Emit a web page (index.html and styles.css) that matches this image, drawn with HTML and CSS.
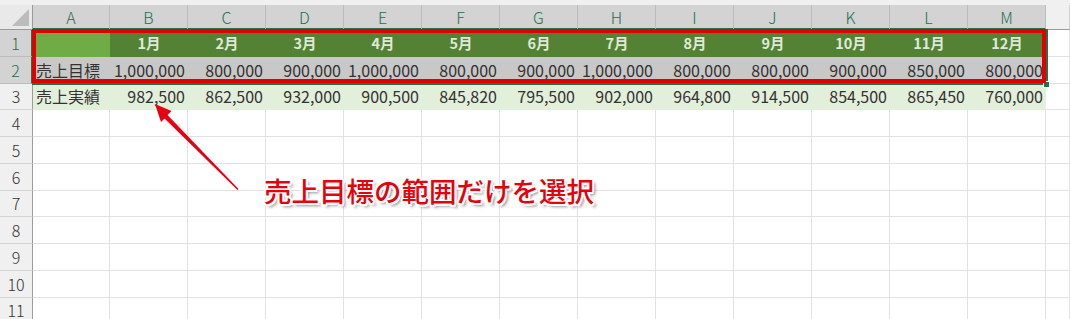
FILE: index.html
```html
<!DOCTYPE html>
<html lang="ja">
<head>
<meta charset="utf-8">
<title>売上目標</title>
<link rel="stylesheet" href="styles.css">
</head>
<body>
<div class="app">
  <div class="topstrip"></div>
  <div class="sheet">
    <div class="corner"><span class="tri"></span></div>
    <div class="ch sel">A</div><div class="ch sel">B</div><div class="ch sel">C</div><div class="ch sel">D</div><div class="ch sel">E</div><div class="ch sel">F</div><div class="ch sel">G</div><div class="ch sel">H</div><div class="ch sel">I</div><div class="ch sel">J</div><div class="ch sel">K</div><div class="ch sel">L</div><div class="ch sel">M</div><div class="ch"></div>

    <div class="rh sel">1</div>
    <div class="c hd-a"></div><div class="c hd">1月</div><div class="c hd">2月</div><div class="c hd">3月</div><div class="c hd">4月</div><div class="c hd">5月</div><div class="c hd">6月</div><div class="c hd">7月</div><div class="c hd">8月</div><div class="c hd">9月</div><div class="c hd">10月</div><div class="c hd">11月</div><div class="c hd">12月</div><div class="c"></div>

    <div class="rh sel">2</div>
    <div class="c tg lbl">売上目標</div><div class="c tg num">1,000,000</div><div class="c tg num">800,000</div><div class="c tg num">900,000</div><div class="c tg num">1,000,000</div><div class="c tg num">800,000</div><div class="c tg num">900,000</div><div class="c tg num">1,000,000</div><div class="c tg num">800,000</div><div class="c tg num">800,000</div><div class="c tg num">900,000</div><div class="c tg num">850,000</div><div class="c tg num">800,000</div><div class="c"></div>

    <div class="rh">3</div>
    <div class="c ac lbl">売上実績</div><div class="c ac num">982,500</div><div class="c ac num">862,500</div><div class="c ac num">932,000</div><div class="c ac num">900,500</div><div class="c ac num">845,820</div><div class="c ac num">795,500</div><div class="c ac num">902,000</div><div class="c ac num">964,800</div><div class="c ac num">914,500</div><div class="c ac num">854,500</div><div class="c ac num">865,450</div><div class="c ac num">760,000</div><div class="c"></div>

    <div class="rh">4</div>
    <div class="c"></div><div class="c"></div><div class="c"></div><div class="c"></div><div class="c"></div><div class="c"></div><div class="c"></div><div class="c"></div><div class="c"></div><div class="c"></div><div class="c"></div><div class="c"></div><div class="c"></div><div class="c"></div>
    <div class="rh">5</div>
    <div class="c"></div><div class="c"></div><div class="c"></div><div class="c"></div><div class="c"></div><div class="c"></div><div class="c"></div><div class="c"></div><div class="c"></div><div class="c"></div><div class="c"></div><div class="c"></div><div class="c"></div><div class="c"></div>
    <div class="rh">6</div>
    <div class="c"></div><div class="c"></div><div class="c"></div><div class="c"></div><div class="c"></div><div class="c"></div><div class="c"></div><div class="c"></div><div class="c"></div><div class="c"></div><div class="c"></div><div class="c"></div><div class="c"></div><div class="c"></div>
    <div class="rh">7</div>
    <div class="c"></div><div class="c"></div><div class="c"></div><div class="c"></div><div class="c"></div><div class="c"></div><div class="c"></div><div class="c"></div><div class="c"></div><div class="c"></div><div class="c"></div><div class="c"></div><div class="c"></div><div class="c"></div>
    <div class="rh">8</div>
    <div class="c"></div><div class="c"></div><div class="c"></div><div class="c"></div><div class="c"></div><div class="c"></div><div class="c"></div><div class="c"></div><div class="c"></div><div class="c"></div><div class="c"></div><div class="c"></div><div class="c"></div><div class="c"></div>
    <div class="rh">9</div>
    <div class="c"></div><div class="c"></div><div class="c"></div><div class="c"></div><div class="c"></div><div class="c"></div><div class="c"></div><div class="c"></div><div class="c"></div><div class="c"></div><div class="c"></div><div class="c"></div><div class="c"></div><div class="c"></div>
    <div class="rh">10</div>
    <div class="c"></div><div class="c"></div><div class="c"></div><div class="c"></div><div class="c"></div><div class="c"></div><div class="c"></div><div class="c"></div><div class="c"></div><div class="c"></div><div class="c"></div><div class="c"></div><div class="c"></div><div class="c"></div>
    <div class="rh">11</div>
    <div class="c"></div><div class="c"></div><div class="c"></div><div class="c"></div><div class="c"></div><div class="c"></div><div class="c"></div><div class="c"></div><div class="c"></div><div class="c"></div><div class="c"></div><div class="c"></div><div class="c"></div><div class="c"></div>
  </div>

  <div class="xl-sel"></div>
  <div class="handle"></div>
  <div class="redbox"></div>
  <svg class="arrow" width="1070" height="319" viewBox="0 0 1070 319">
    <polygon points="155,104 171.5,111 167.5,115 238.5,189 237.5,190 164.5,118.5 161,122" fill="#e60012"/>
  </svg>
  <div class="note">売上目標の範囲だけを選択</div>
</div>
</body>
</html>
```

FILE: styles.css
```css
html, body {
  margin: 0;
  padding: 0;
  background: #ffffff;
  overflow: hidden;
}

.app {
  position: relative;
  width: 1070px;
  height: 319px;
  overflow: hidden;
  font-family: "Noto Sans CJK JP", "Noto Sans", sans-serif;
}

.topstrip {
  height: 5px;
  background: #f0f0f0;
}

.sheet {
  display: grid;
  grid-template-columns: 33px 77px repeat(12, 78px) 1fr;
  grid-template-rows: 25px repeat(11, 26.75px);
}

.sheet > div {
  box-sizing: border-box;
  border-right: 1px solid #e1e1e1;
  border-bottom: 1px solid #e1e1e1;
  display: flex;
  align-items: center;
  min-width: 0;
  overflow: hidden;
  white-space: nowrap;
}

.corner {
  position: relative;
  background: #e9e9e9;
  border-right: 1px solid #9b9b9b !important;
  border-bottom: 1px solid #9b9b9b !important;
}

.tri {
  position: absolute;
  right: 3px;
  bottom: 3px;
  width: 0;
  height: 0;
  border-left: 17px solid transparent;
  border-bottom: 17px solid #bcbcbc;
}

.ch {
  justify-content: center;
  background: #f0f0f0;
  color: #333333;
  font-size: 16px;
  font-weight: 300;
  border-right: 1px solid #d0d0d0 !important;
  border-bottom: 1px solid #9b9b9b !important;
  padding-top: 1px;
}

.ch.sel {
  background: #d3d3d3;
  color: #227250;
  border-right: 1px solid #bcbcbc !important;
  border-bottom: 2px solid #217346 !important;
}

.rh {
  justify-content: center;
  background: #f0f0f0;
  color: #333333;
  font-size: 16px;
  font-weight: 300;
  border-right: 1px solid #9b9b9b !important;
  border-bottom: 1px solid #d4d4d4 !important;
}

.rh.sel {
  background: #d3d3d3;
  color: #227250;
  border-right: 2px solid #217346 !important;
  border-bottom: 1px solid #bcbcbc !important;
}

.c {
  font-size: 16px;
  color: #333333;
  padding: 0 2px 0 3px;
}

.hd-a {
  background: #6fac46;
  border-color: #6fac46 !important;
}

.hd {
  background: #548235;
  border-color: #548235 !important;
  color: #dfe9d7 !important;
  font-weight: 700;
  justify-content: center;
  font-size: 14.5px;
}

.tg {
  background: #c8c8c8;
  border-color: #c8c8c8 !important;
}

.ac {
  background: #e2efda;
  border-color: #e2efda !important;
}

.num {
  justify-content: flex-end;
}

.lbl {
  justify-content: flex-start;
}

.xl-sel {
  position: absolute;
  left: 32px;
  top: 29px;
  width: 1016px;
  height: 56px;
  box-sizing: border-box;
  border: 2px solid #217346;
}

.handle {
  position: absolute;
  left: 1043px;
  top: 81px;
  width: 5px;
  height: 5px;
  background: #217346;
  border: 1px solid #ffffff;
  box-sizing: content-box;
}

.redbox {
  position: absolute;
  left: 32px;
  top: 29px;
  width: 1014px;
  height: 54px;
  box-sizing: border-box;
  border: 4px solid #e00000;
}

.arrow {
  position: absolute;
  left: 0;
  top: 0;
  pointer-events: none;
}

.note {
  position: absolute;
  left: 264px;
  top: 170px;
  font-size: 27.5px;
  font-weight: 500;
  line-height: 40px;
  color: #e8000b;
  letter-spacing: 0;
  text-shadow:
    -2px 0 0 #ffffff, 2px 0 0 #ffffff, 0 -2px 0 #ffffff, 0 2px 0 #ffffff,
    -1.5px -1.5px 0 #ffffff, 1.5px -1.5px 0 #ffffff, -1.5px 1.5px 0 #ffffff, 1.5px 1.5px 0 #ffffff,
    3px 3px 3px rgba(0, 0, 0, 0.45);
}
```
